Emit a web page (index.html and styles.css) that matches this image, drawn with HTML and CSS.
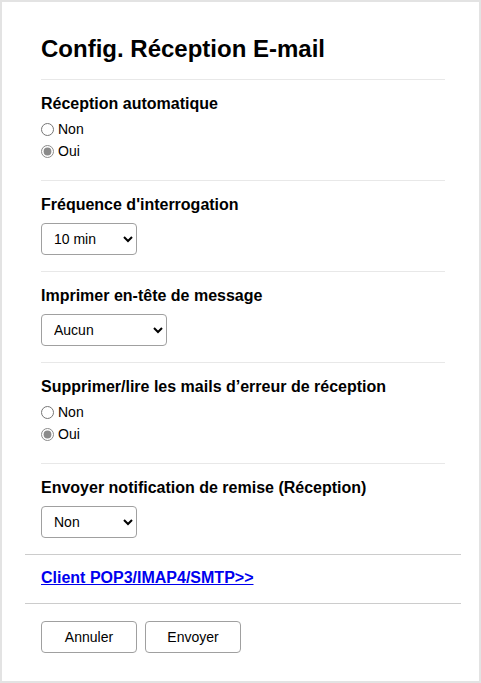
FILE: index.html
```html
<!DOCTYPE html>
<html lang="fr">
  <head>
    <meta charset="UTF-8" />
    <meta name="viewport" content="width=device-width, initial-scale=1.0" />
    <title>Config. Réception E-mail</title>
    <link rel="stylesheet" href="styles.css">
  </head>
  <body>
    <div class="frame">
      <h1 class="title">Config. Réception E-mail</h1>

      <form class="form">
        <!-- Réception automatique -->
        <div class="section">
          <h3>Réception automatique</h3>
          <label class="radio"><input type="radio" name="auto" /> Non</label>
          <label class="radio"><input type="radio" name="auto" checked /> Oui</label>
        </div>

        <!-- Fréquence -->
        <div class="section">
          <h3>Fréquence d'interrogation</h3>
          <select class="select">
            <option>10 min</option>
          </select>
        </div>

        <!-- En-tête -->
        <div class="section">
          <h3>Imprimer en-tête de message</h3>
          <select class="select wide">
            <option>Aucun</option>
          </select>
        </div>

        <!-- Mails d'erreur -->
        <div class="section">
          <h3>Supprimer/lire les mails d’erreur de réception</h3>
          <label class="radio"><input type="radio" name="err" /> Non</label>
          <label class="radio"><input type="radio" name="err" checked /> Oui</label>
        </div>

        <!-- Notification -->
        <div class="section">
          <h3>Envoyer notification de remise (Réception)</h3>
          <select class="select">
            <option>Non</option>
          </select>
        </div>

        <div class="link-row">
          <a href="#">Client POP3/IMAP4/SMTP&gt;&gt;</a>
        </div>

        <div class="actions">
          <button type="button">Annuler</button>
          <button type="button">Envoyer</button>
        </div>
      </form>
    </div>
  </body>
</html>
```

FILE: styles.css
```css
body {
  font-family: Arial, "Liberation Sans", sans-serif;
  margin: 0;
  color: #000;
}
.frame {
  border: 2px solid #e3e3e3;
  height: 683px;
  box-sizing: border-box;
  padding: 0 18px 0 23px;
  background: white;
}
.title {
  font-size: 24px;
  font-weight: bold;
  margin: 0 16px;
  padding: 33px 0 16px;
  line-height: 28px;
}
.section {
  border-top: 1px solid #e8e8e8;
  margin: 0 16px;
  padding: 15px 0 16px;
}
.section h3 {
  font-size: 16px;
  line-height: 18px;
  margin: 0 0 9px;
}
.radio {
  display: flex;
  align-items: center;
  height: 22px;
  font-size: 14px;
}
.section h3 + .radio {
  margin-top: -4px;
}
.radio:last-child {
  margin-bottom: 2px;
}
.radio input {
  margin: 0 4px 0 0;
  accent-color: #8a8a8a;
}
.select {
  width: 96px;
  height: 32px;
  font-family: Arial, "Liberation Sans", sans-serif;
  font-size: 14px;
  padding: 0 8px;
  border: 1px solid #a0a0a0;
  border-radius: 4px;
  background: white;
  color: #000;
}
.select.wide {
  width: 126px;
}
.link-row {
  border-top: 1px solid #cccccc;
  padding: 14px 16px 16px;
  line-height: 18px;
}
.link-row a {
  font-size: 16px;
  font-weight: bold;
  color: #0000ee;
}
.actions {
  border-top: 1px solid #cccccc;
  padding: 17px 16px;
  display: flex;
  gap: 8px;
}
.actions button {
  width: 96px;
  height: 32px;
  font-family: Arial, "Liberation Sans", sans-serif;
  font-size: 14px;
  background: white;
  border: 1px solid #a0a0a0;
  border-radius: 4px;
  color: #000;
  cursor: pointer;
}
```
